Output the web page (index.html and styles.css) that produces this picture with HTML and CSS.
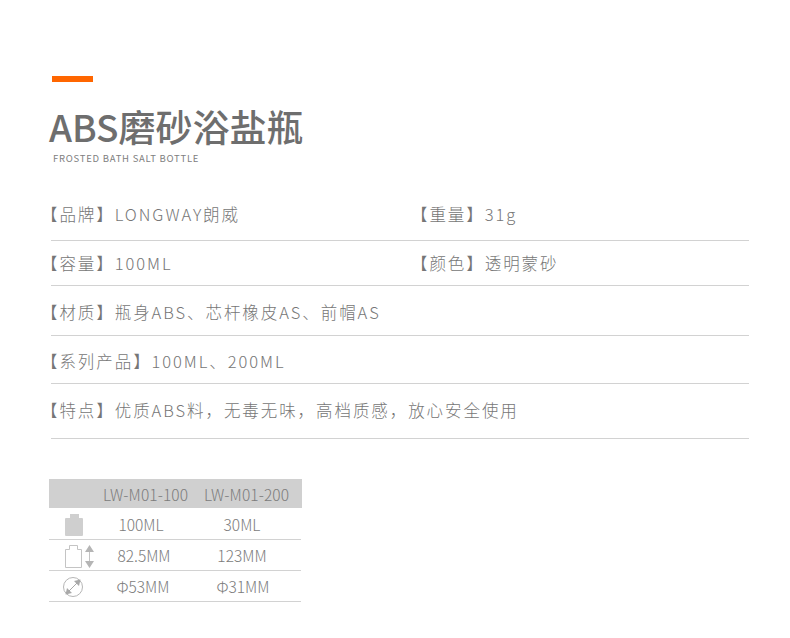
FILE: index.html
```html
<!DOCTYPE html>
<html lang="zh">
<head>
<meta charset="utf-8">
<title>ABS磨砂浴盐瓶</title>
<link rel="stylesheet" href="styles.css">
</head>
<body>
<main class="page">
  <div class="accent"></div>
  <h1 class="title">ABS磨砂浴盐瓶</h1>
  <p class="subtitle">FROSTED BATH SALT BOTTLE</p>
  <section class="specs">
    <div class="row r1"><span class="cell">【品牌】LONGWAY朗威</span><span class="cell">【重量】31g</span></div>
    <div class="row r2"><span class="cell">【容量】100ML</span><span class="cell">【颜色】透明蒙砂</span></div>
    <div class="row r3"><span class="cell">【材质】瓶身ABS、芯杆橡皮AS、前帽AS</span></div>
    <div class="row r4"><span class="cell">【系列产品】100ML、200ML</span></div>
    <div class="row r5"><span class="cell">【特点】优质ABS料，无毒无味，高档质感，放心安全使用</span></div>
  </section>
  <section class="table">
    <div class="thead"><span></span><span>LW-M01-100</span><span>LW-M01-200</span></div>
    <div class="tr first">
      <span class="ic"><svg width="18" height="22" viewBox="0 0 18 22"><path fill="#cfcfcf" d="M5 0h9v4h3a1 1 0 0 1 1 1v16a1 1 0 0 1-1 1H1a1 1 0 0 1-1-1V5a1 1 0 0 1 1-1h4z"/></svg></span>
      <span>100ML</span><span>30ML</span>
    </div>
    <div class="tr second">
      <span class="ic"><svg width="29" height="23" viewBox="0 0 29 23"><path fill="#fff" stroke="#c4c4c4" d="M4.500 .500h8v4h4v18H.500v-18h4z"/><path fill="#b5b5b5" d="M24.500 0l4.500 7H20zM24.500 23l-4.500-7h9z"/><path stroke="#c4c4c4" fill="none" d="M24.500 7v9"/></svg></span>
      <span>82.5MM</span><span>123MM</span>
    </div>
    <div class="tr">
      <span class="ic wide"><svg width="20" height="20" viewBox="0 0 20 20"><circle cx="10" cy="10" r="9.500" fill="none" stroke="#b5b5b5"/><path fill="#a8a8a8" d="M17.500 2.500l-1.500 6.500-5-5zM2.500 17.500l1.500-6.500 5 5z"/><path stroke="#a8a8a8" d="M6 14l8-8"/></svg></span>
      <span>Φ53MM</span><span>Φ31MM</span>
    </div>
  </section>
</main>
</body>
</html>
```
FILE: styles.css
```css
* { box-sizing: border-box; }
html, body { margin: 0; padding: 0; background: #fff; }
body { font-family: "Noto Sans CJK SC", "Noto Sans", sans-serif; color: #6e6e6e; }
.page { width: 790px; height: 638px; padding: 76px 0 0 0; overflow: hidden; }
.accent { width: 41px; height: 6px; margin-left: 52px; background: #ff6600; }
.title { margin: 19px 0 0 49px; font-size: 37px; line-height: 50px; font-weight: 500; color: #6e6e6e; letter-spacing: 0; }
.subtitle { margin: 0 0 0 53px; font-size: 9.500px; line-height: 14px; letter-spacing: .75px; color: #808080; }
.specs { margin: 37px 0 0 43px; width: 706px; }
.row { display: flex; align-items: flex-start; margin-left: 8px; border-bottom: 1px solid #d2d2d2; font-size: 16.500px; line-height: 24px; letter-spacing: 1.930px; color: #767676; font-weight: 300; }
.cell { margin-left: -10px; width: 372px; flex: none; white-space: nowrap; }
.cell + .cell { margin-left: -2px; }
.r1 { height: 39px; }
.r2 { height: 45px; padding-top: 10px; }
.r3 { height: 50px; padding-top: 14px; }
.r4 { height: 48px; padding-top: 13px; }
.r5 { height: 55px; padding-top: 14px; }
.table { margin: 40px 0 0 49px; width: 253px; font-size: 15.500px; color: #7c7c7c; font-weight: 300; }
.thead, .tr { display: grid; align-items: center; text-align: center; }
.thead { height: 29px; background: #d0d0d0; grid-template-columns: 46px 101px 101px; letter-spacing: .1px; }
.tr { height: 31px; border-bottom: 1px solid #d2d2d2; width: 252px; grid-template-columns: 44px 100px 100px; }
.tr.first { height: 32px; grid-template-columns: 42px 100px 102px; }
.tr.second { grid-template-columns: 45px 100px 96px; }
.ic { display: flex; align-items: center; justify-content: flex-start; height: 24px; padding: 2px 0 0 16px; }
.ic.wide { padding-left: 14px; }
```
